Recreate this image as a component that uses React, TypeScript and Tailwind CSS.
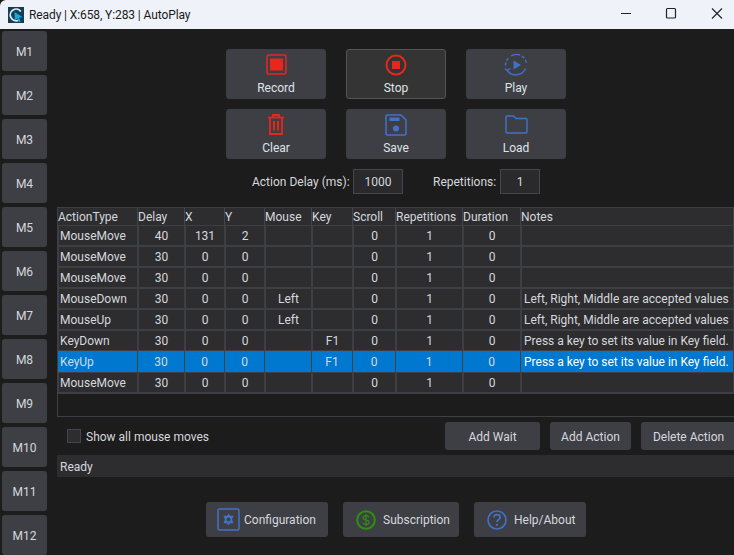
import React from "react";

const FONT = "font-['Roboto','Noto_Sans',sans-serif]";
const RED = "#e8261c";
const BLUE = "#4272c8";
const GREEN = "#2f8f10";

const cols = "grid-cols-[80px_47px_40px_40px_47px_41px_43px_67px_58px_213px]";
const rows = [
  ["MouseMove", "40", "131", "2", "", "", "0", "1", "0", ""],
  ["MouseMove", "30", "0", "0", "", "", "0", "1", "0", ""],
  ["MouseMove", "30", "0", "0", "", "", "0", "1", "0", ""],
  ["MouseDown", "30", "0", "0", "Left", "", "0", "1", "0", "Left, Right, Middle are accepted values"],
  ["MouseUp", "30", "0", "0", "Left", "", "0", "1", "0", "Left, Right, Middle are accepted values"],
  ["KeyDown", "30", "0", "0", "", "F1", "0", "1", "0", "Press a key to set its value in Key field."],
  ["KeyUp", "30", "0", "0", "", "F1", "0", "1", "0", "Press a key to set its value in Key field."],
  ["MouseMove", "30", "0", "0", "", "", "0", "1", "0", ""],
];
const headers = ["ActionType", "Delay", "X", "Y", "Mouse", "Key", "Scroll", "Repetitions", "Duration", "Notes"];

function RecordIcon() {
  return (
    <svg width="21" height="21" viewBox="0 0 21 21">
      <rect x="1" y="1" width="19" height="19" rx="2" fill="none" stroke={RED} strokeWidth="1.5" />
      <rect x="4" y="4.5" width="13" height="12" fill={RED} />
    </svg>
  );
}
function StopIcon() {
  return (
    <svg width="22" height="22" viewBox="0 0 22 22">
      <circle cx="11" cy="11" r="9.5" fill="none" stroke={RED} strokeWidth="2" />
      <rect x="7" y="7" width="8" height="8" fill={RED} />
    </svg>
  );
}
function PlayIcon() {
  return (
    <svg width="24" height="24" viewBox="0 0 24 24" fill="none" stroke={BLUE} strokeWidth="1.4">
      <path d="M3 17a10.5 10.5 0 0 0 18.5 -1.5" />
      <path d="M1.5 12.5 a10.5 10.5 0 0 1 3 -7.5" strokeDasharray="3 2" />
      <path d="M7 3a10.5 10.5 0 0 1 9 -1" />
      <path d="M18 3a10.5 10.5 0 0 1 4.5 8" strokeDasharray="3 2" />
      <path d="M1 15.5 L3 17.5 L6.5 15.5" />
      <path d="M9.5 7.5 L17 12 L9.5 16.5 Z" fill={BLUE} stroke="none" />
    </svg>
  );
}
function TrashIcon() {
  return (
    <svg width="16" height="21" viewBox="0 0 16 21" fill="none" stroke={RED} strokeWidth="1.8">
      <path d="M0 3.5H16" />
      <path d="M5 3V1H11V3" />
      <path d="M2 4V20H14V4" />
      <path d="M6 7V16.500M10 7V16.500" strokeWidth="1.900" />
    </svg>
  );
}
function SaveIcon() {
  return (
    <svg width="22" height="22" viewBox="0 0 22 22" fill="none">
      <path d="M2.5 1H16L21 6V19.5A1.5 1.5 0 0 1 19.5 21H2.5A1.5 1.5 0 0 1 1 19.5V2.5A1.5 1.5 0 0 1 2.5 1Z" stroke={BLUE} strokeWidth="1.5" />
      <rect x="4.5" y="3.5" width="10" height="3.5" fill={BLUE} />
      <circle cx="11" cy="14.5" r="3" fill={BLUE} />
    </svg>
  );
}
function FolderIcon() {
  return (
    <svg width="23" height="19" viewBox="0 0 23 19" fill="none" stroke={BLUE} strokeWidth="1.4">
      <path d="M1 2A1 1 0 0 1 2 1H8.5L11 3.5H21A1 1 0 0 1 22 4.5V17A1 1 0 0 1 21 18H2A1 1 0 0 1 1 17Z" />
    </svg>
  );
}
function ConfigIcon() {
  return (
    <svg width="23" height="23" viewBox="0 0 23 23" fill="none">
      <rect x="1" y="1" width="21" height="21" rx="1.5" stroke={BLUE} strokeWidth="1.5" />
      <path d="M11.5 5.5L13 7.8H16.5L15 11.5L16.5 15.2H13L11.5 17.5L10 15.2H6.5L8 11.5L6.5 7.8H10Z" fill={BLUE} />
      <circle cx="11.5" cy="11.500" r="2" fill="#3e3f45" />
    </svg>
  );
}
function SubIcon() {
  return (
    <svg width="20" height="20" viewBox="0 0 20 20" fill="none">
      <circle cx="10" cy="10" r="8.8" stroke={GREEN} strokeWidth="2" />
      <path d="M13 7.2C12.4 6 11.3 5.6 10 5.6C8.3 5.6 7 6.4 7 7.8C7 10.8 13.2 9.2 13.2 12.2C13.2 13.6 11.8 14.4 10 14.4C8.6 14.4 7.5 13.9 6.8 12.8M10 3.8V16.2" stroke={GREEN} strokeWidth="1.2" />
    </svg>
  );
}
function HelpIcon() {
  return (
    <svg width="20" height="20" viewBox="0 0 20 20" fill="none">
      <circle cx="10" cy="10" r="9" stroke={BLUE} strokeWidth="1.6" />
      <path d="M6.8 7.5C6.8 5.7 8.2 4.7 10 4.7C11.8 4.7 13.2 5.7 13.2 7.3C13.2 9.5 10 9.500 10 12" stroke={BLUE} strokeWidth="1.7" />
      <circle cx="10" cy="14.8" r="1.1" fill={BLUE} />
    </svg>
  );
}
function AppIcon() {
  return (
    <svg width="16" height="16" viewBox="0 0 16 16" fill="none">
      <rect width="16" height="16" fill="#123f56" />
      <path d="M12.8 4.500A5.800 5.800 0 1 0 10.500 13.200" stroke="#dfeaf0" strokeWidth="1.800" />
      <path d="M6.500 5L14.500 10L11 10.800L12.800 14.500L11 15.200L9.400 11.500L6.800 13.500Z" fill="#1ba6dc" />
    </svg>
  );
}

function ActionButton({ icon, label, active }: { icon: React.ReactNode; label: string; active?: boolean }) {
  return (
    <div
      className={
        active
          ? "w-[100px] h-[50px] rounded-[3px] bg-[#343434] border border-[#555555] flex flex-col items-center text-[#dfe3e8]"
          : "w-[100px] h-[50px] rounded-[3px] bg-[#3e3f45] border border-[#3e3f45] flex flex-col items-center text-[#dfe3e8]"
      }
    >
      <div className="h-[27px] mt-[1px] flex items-center justify-center">{icon}</div>
      <div className="text-[12px] leading-[17px] mt-[2px]">{label}</div>
    </div>
  );
}

function SmallButton({ label, w }: { label: string; w: string }) {
  return (
    <div className={`${w} h-[28px] rounded-[3px] bg-[#3e3f45] flex items-center justify-center pt-[2px] text-[12px] text-[#d5d8dc]`}>
      {label}
    </div>
  );
}

function BottomButton({ icon, label, cls }: { icon: React.ReactNode; label: string; cls: string }) {
  return (
    <div className={`${cls} h-[35px] rounded-[3px] bg-[#3e3f45] flex items-center text-[12px] text-[#d5d8dc]`}>
      {icon}
      <span className="pt-[1px]">{label}</span>
    </div>
  );
}

export default function App() {
  return (
    <div className={`${FONT} w-[734px] h-[555px] overflow-hidden bg-[#1c1c1c] flex flex-col`}>
      <div className="h-[29px] bg-[#eff2f9] rounded-tl-[6px] flex items-center pl-[8px] shrink-0">
        <AppIcon />
        <div className="ml-[5px] text-[12px] tracking-[-0.1px] text-[#1a1a1a]">Ready | X:658, Y:283 | AutoPlay</div>
        <div className="ml-auto flex items-center -mr-[6px]">
          <svg width="46" height="29" viewBox="0 0 46 29" fill="none" stroke="#222222">
            <path d="M19 13.5H29" />
          </svg>
          <svg width="46" height="29" viewBox="0 0 46 29" fill="none" stroke="#222222" strokeWidth="1.2">
            <rect x="18.5" y="8.5" width="9" height="9.5" rx="1" />
          </svg>
          <svg width="46" height="29" viewBox="0 0 46 29" fill="none" stroke="#222222" strokeWidth="1.1">
            <path d="M18 8.5L28 18.5M28 8.5L18 18.5" />
          </svg>
        </div>
      </div>

      <div className="flex flex-1 min-h-0">
        <div className="w-[57px] shrink-0 pl-[2px] pt-[2px] flex flex-col gap-[4px]">
          {Array.from({ length: 12 }, (_, i) => (
            <div
              key={i}
              className="w-[45px] h-[40px] shrink-0 rounded-[3px] bg-[#3e3f45] flex items-center justify-center pt-[2px] text-[12px] text-[#d5d8dc]"
            >
              {"M" + (i + 1)}
            </div>
          ))}
        </div>

        <div className="flex-1 min-w-0 flex flex-col">
          <div className="pt-[20px] pl-[169px] flex flex-col gap-[10px]">
            <div className="flex gap-[20px]">
              <ActionButton icon={<RecordIcon />} label="Record" />
              <ActionButton icon={<StopIcon />} label="Stop" active />
              <ActionButton icon={<PlayIcon />} label="Play" />
            </div>
            <div className="flex gap-[20px]">
              <ActionButton icon={<TrashIcon />} label="Clear" />
              <ActionButton icon={<SaveIcon />} label="Save" />
              <ActionButton icon={<FolderIcon />} label="Load" />
            </div>
          </div>

          <div className="mt-[10px] h-[25px] flex items-center text-[12px] text-[#d5d8dc]">
            <div className="ml-[195px] w-[100px] whitespace-nowrap">Action Delay (ms):</div>
            <div className="ml-[1px] w-[50px] h-[25px] border border-[#45464b] bg-[#2a2a2c] flex items-center justify-center">1000</div>
            <div className="ml-[30px] w-[66px] whitespace-nowrap">Repetitions:</div>
            <div className="ml-[1px] w-[40px] h-[25px] border border-[#45464b] bg-[#2a2a2c] flex items-center justify-center">1</div>
          </div>

          <div className="mt-[13px] h-[210px] border border-[#3e3f45] border-r-0 flex flex-col text-[12px] text-[#d5d8dc] leading-[16px]">
            <div className="bg-[#3e3f45] pb-[1px]">
              <div className={`grid ${cols} h-[17px] bg-[#2d2d30]`}>
                {headers.map((h) => (
                  <div key={h} className="border-r border-[#45464b] flex items-center whitespace-nowrap">
                    {h}
                  </div>
                ))}
              </div>
              {rows.map((r, ri) => {
                const sel = ri === 6;
                return (
                  <div key={ri} className={`grid ${cols} h-[21px] ${sel ? "bg-[#4a4038]" : ""}`}>
                    {r.map((c, ci) => {
                      const left = ci === 0 || ci === 9;
                      const pad = !left ? "justify-center" : sel ? (ci === 0 ? "pl-[2px]" : "pl-[3px]") : ci === 0 ? "pl-[1px]" : "pl-[2px]";
                      const surface = sel
                        ? `mr-[1px] bg-[#0078cf] ${ci === 9 ? "text-white" : ""}`
                        : "my-[1px] mx-[1px] bg-[#2d2d30]";
                      return (
                        <div key={ci} className={`${surface} flex items-center whitespace-nowrap overflow-hidden ${pad}`}>
                          {c}
                        </div>
                      );
                    })}
                  </div>
                );
              })}
            </div>
          </div>

          <div className="mt-[5px] h-[28px] flex items-center text-[12px] text-[#d5d8dc]">
            <div className="ml-[10px] w-[14px] h-[14px] bg-[#2d2d30] border border-[#45464b]" />
            <div className="ml-[5px] pt-[1px]">Show all mouse moves</div>
            <div className="ml-auto flex gap-[10px] -mr-[2px]">
              <SmallButton label="Add Wait" w="w-[95px]" />
              <SmallButton label="Add Action" w="w-[81px]" />
              <SmallButton label="Delete Action" w="w-[95px]" />
            </div>
          </div>

          <div className="mt-[5px] h-[22px] bg-[#2d2d30] pl-[3px] pt-[2px] flex items-center text-[12px] text-[#d5d8dc]">Ready</div>

          <div className="mt-[25px] pl-[149px] flex gap-[15px]">
            <BottomButton icon={<ConfigIcon />} label="Configuration" cls="w-[122px] pl-[11px] gap-[4px]" />
            <BottomButton icon={<SubIcon />} label="Subscription" cls="w-[116px] pl-[13px] gap-[7px]" />
            <BottomButton icon={<HelpIcon />} label="Help/About" cls="w-[112px] pl-[13px] gap-[7px]" />
          </div>
        </div>
      </div>
    </div>
  );
}
